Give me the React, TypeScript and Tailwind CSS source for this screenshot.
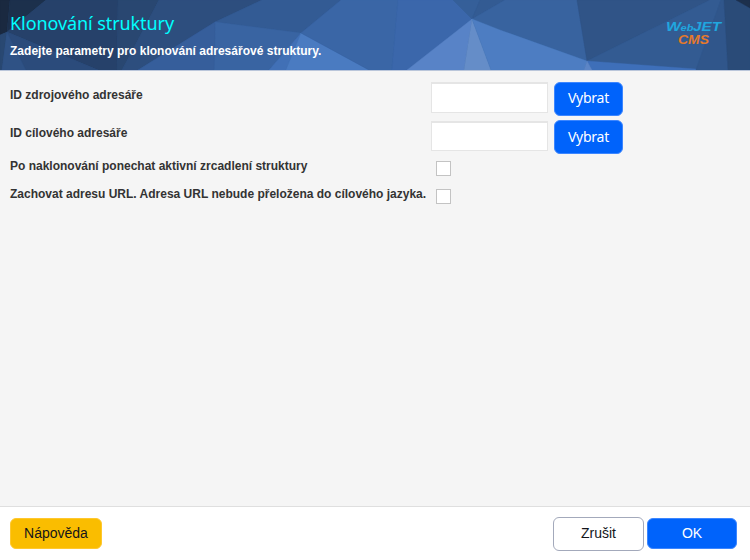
import React from 'react';

type Facet = { points: string; fill: string };

const facets: Facet[] = [
  { points: '0,0 10,0 7,32 0,35', fill: '#1a2940' },
  { points: '10,0 46,0 7,32', fill: '#1c304c' },
  { points: '46,0 118,0 117,70 98,70 7,32', fill: '#26416a' },
  { points: '118,0 159,0 122,70 117,70', fill: '#294771' },
  { points: '0,35 7,32 2,70 0,70', fill: '#294872' },
  { points: '7,32 26,70 2,70', fill: '#2f5285' },
  { points: '7,32 98,70 26,70', fill: '#2b4b7b' },
  { points: '159,0 262,0 215,22 138,70 122,70', fill: '#2d4e7e' },
  { points: '262,0 341,0 301,33 215,22', fill: '#335b94' },
  { points: '215,22 301,33 269,70 214,70', fill: '#3964a2' },
  { points: '215,22 214,70 138,70', fill: '#365e9b' },
  { points: '301,33 286,70 269,70', fill: '#4170b6' },
  { points: '301,33 369,70 286,70', fill: '#4a7bc1' },
  { points: '341,0 398,0 392,70 369,70 301,33', fill: '#3a66a6' },
  { points: '398,0 453,0 472,19 407,70 392,70', fill: '#3b67ab' },
  { points: '453,0 480,0 472,19', fill: '#355f99' },
  { points: '480,0 505,0 472,19', fill: '#335b93' },
  { points: '505,0 577,0 587,61 500,30 472,19', fill: '#38639f' },
  { points: '472,19 464,70 407,70', fill: '#5883c7' },
  { points: '472,19 491,70 464,70', fill: '#658dc8' },
  { points: '472,19 500,30 587,61 584,70 491,70', fill: '#4d7dc2' },
  { points: '577,0 710,0 587,61', fill: '#305487' },
  { points: '710,0 721,0 696,69 587,61', fill: '#335b92' },
  { points: '721,0 724,0 728,70 696,70', fill: '#30568b' },
  { points: '587,61 696,69 695,70 592,70', fill: '#3e6fb9' },
  { points: '587,61 592,70 584,70', fill: '#5c85c6' },
  { points: '724,0 736,0 750,8 750,70 728,70', fill: '#2a4b78' },
  { points: '736,0 750,0 750,8', fill: '#1d304c' },
];

function Header() {
  return (
    <header className="relative h-[71px] shrink-0 overflow-hidden border-b border-[#bac6da] bg-[#315890]">
      <svg className="absolute inset-0 h-[70px] w-[750px]" viewBox="0 0 750 70" aria-hidden="true">
        {facets.map((f) => (
          <polygon key={f.points} points={f.points} fill={f.fill} stroke={f.fill} strokeWidth=".4" />
        ))}
      </svg>
      <div className="relative flex justify-between pl-[10px] pr-[26px]">
        <div className="pt-[11px]">
          <h1 className="font-['Noto_Sans',sans-serif] text-[18px] leading-[24px] tracking-[-0.08px] text-[#00ffff]">Klonování struktury</h1>
          <p className="mt-[8px] font-['Liberation_Sans',sans-serif] text-[12px] font-bold leading-[16px] tracking-[0.015px] text-white">
            Zadejte parametry pro klonování adresářové struktury.
          </p>
        </div>
        <svg
          className="mt-[18px] h-[30px] w-[60px]"
          viewBox="0 0 60 30"
          fontFamily="Liberation Sans, sans-serif"
          fontWeight="bold"
          fontStyle="italic"
        >
          <g fill="#20a6df">
            <text x="2" y="13" fontSize="12.5" textLength="15" lengthAdjust="spacingAndGlyphs">W</text>
            <text x="16.5" y="13" fontSize="9" textLength="13" lengthAdjust="spacingAndGlyphs">eb</text>
            <text x="29" y="13" fontSize="12.5" textLength="28" lengthAdjust="spacingAndGlyphs">JET</text>
          </g>
          <text x="14" y="26" fontSize="12.5" textLength="31" lengthAdjust="spacingAndGlyphs" fill="#e5792b">CMS</text>
        </svg>
      </div>
    </header>
  );
}

type PickerProps = { label: string; inputClass: string; buttonClass: string };

function PickerRow({ label, inputClass, buttonClass }: PickerProps) {
  return (
    <div className="flex h-[38px]">
      <label className="w-[421px] pt-[5px]">{label}</label>
      <input
        type="text"
        aria-label={label}
        className={`w-[117px] border border-t-2 border-[#e5e5e5] bg-white ${inputClass}`}
      />
      <button
        className={`ml-[6px] h-[34px] w-[69px] rounded-[6px] border border-[#3c86ff] bg-[#0063fb] font-['Noto_Sans',sans-serif] text-[14px] font-normal leading-[20px] tracking-[-0.25px] text-white ${buttonClass}`}
      >
        Vybrat
      </button>
    </div>
  );
}

function CheckRow({ label }: { label: string }) {
  return (
    <div className="flex h-[28px]">
      <label className="w-[426px] whitespace-nowrap">{label}</label>
      <input type="checkbox" aria-label={label} className="mt-[3px] h-[15px] w-[15px] appearance-none border border-[#c3c3c3] bg-white" />
    </div>
  );
}

export default function App() {
  return (
    <div className="flex h-[560px] w-[750px] flex-col overflow-hidden bg-[#f5f5f5]">
      <Header />
      <main className="flex-1 pl-[10px] pt-[11px] font-['Liberation_Sans',sans-serif] text-[12px] font-bold leading-[16px] text-[#333333]">
        <PickerRow label="ID zdrojového adresáře" inputClass="h-[31px]" buttonClass="pb-[2px]" />
        <PickerRow label="ID cílového adresáře" inputClass="mt-px h-[30px]" buttonClass="pb-0" />
        <CheckRow label="Po naklonování ponechat aktivní zrcadlení struktury" />
        <CheckRow label="Zachovat adresu URL. Adresa URL nebude přeložena do cílového jazyka." />
      </main>
      <footer className="flex h-[54px] shrink-0 items-start justify-between border-t border-[#dfdfdf] bg-white pl-[10px] pr-[13px] pt-[10px] font-['Liberation_Sans',sans-serif] text-[14px] leading-[20px]">
        <button className="mt-px h-[31px] w-[92px] rounded-[6px] border border-[#ffc72e] bg-[#fabd00] pb-[2px] text-[#13151b]">Nápověda</button>
        <div className="flex gap-[3px]">
          <button className="h-[34px] w-[91px] rounded-[6px] border border-[#a3a9bb] bg-white pb-[2px] text-[#13151b]">Zrušit</button>
          <button className="mt-px h-[31px] w-[90px] rounded-[6px] border border-[#3c86ff] bg-[#0063fb] pb-[2px] text-white">OK</button>
        </div>
      </footer>
    </div>
  );
}
